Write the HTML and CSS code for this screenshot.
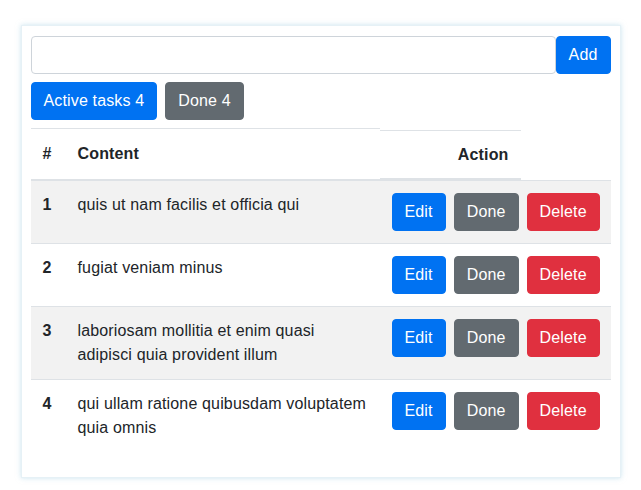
FILE: index.html
```html
<!DOCTYPE html>
<html lang="en">
<head>
<meta charset="utf-8">
<title>Tasks</title>
<link rel="stylesheet" href="styles.css">
</head>
<body>
<div class="card">
  <form class="add-row" onsubmit="return false">
    <input class="field" type="text" aria-label="New task">
    <button class="btn btn-primary" type="submit">Add</button>
  </form>
  <div class="tabs">
    <button class="btn btn-primary" type="button">Active tasks 4</button>
    <button class="btn btn-secondary" type="button">Done 4</button>
  </div>
  <table class="tasks">
    <colgroup>
      <col class="col-num">
      <col class="col-content">
      <col class="col-action">
    </colgroup>
    <thead>
      <tr>
        <th class="head-cell">#</th>
        <th class="head-cell">Content</th>
        <th class="act-head"><div class="act-label">Action</div></th>
      </tr>
    </thead>
    <tbody>
      <tr>
        <td class="num">1</td>
        <td>quis ut nam facilis et officia qui</td>
        <td><div class="actions"><button class="btn btn-primary">Edit</button><button class="btn btn-secondary">Done</button><button class="btn btn-danger">Delete</button></div></td>
      </tr>
      <tr>
        <td class="num">2</td>
        <td>fugiat veniam minus</td>
        <td><div class="actions"><button class="btn btn-primary">Edit</button><button class="btn btn-secondary">Done</button><button class="btn btn-danger">Delete</button></div></td>
      </tr>
      <tr>
        <td class="num">3</td>
        <td>laboriosam mollitia et enim quasi adipisci quia provident illum</td>
        <td><div class="actions"><button class="btn btn-primary">Edit</button><button class="btn btn-secondary">Done</button><button class="btn btn-danger">Delete</button></div></td>
      </tr>
      <tr>
        <td class="num">4</td>
        <td>qui ullam ratione quibusdam voluptatem quia omnis</td>
        <td><div class="actions"><button class="btn btn-primary">Edit</button><button class="btn btn-secondary">Done</button><button class="btn btn-danger">Delete</button></div></td>
      </tr>
    </tbody>
  </table>
</div>
</body>
</html>
```

FILE: styles.css
```css
* { box-sizing: border-box; }

html, body {
  margin: 0;
  background: #ffffff;
}

body {
  font-family: "Liberation Sans", Arial, sans-serif;
  font-size: 16px;
  line-height: 24px;
  letter-spacing: 0.15px;
  color: #212529;
  padding: 25px 0;
}

.card {
  width: 600px;
  margin: 0 auto;
  background: #fff;
  border: 1px solid #e6f1f6;
  box-shadow: 0 0 5px rgba(160, 205, 225, 0.55);
  padding: 10px 9px 9px;
}

.add-row {
  display: flex;
  margin: 0;
}

.field {
  flex: 1;
  height: 38px;
  border: 1px solid #ced4da;
  border-radius: 4px;
  padding: 6px 12px;
  font: inherit;
  color: #495057;
  background: #fff;
}

.btn {
  font-family: inherit;
  font-size: 16px;
  line-height: 24px;
  letter-spacing: 0.15px;
  padding: 6px 12px;
  border: 1px solid transparent;
  border-radius: 4px;
  color: #fff;
  cursor: pointer;
  white-space: nowrap;
}

.btn-primary { background: #0072f2; border-color: #0072f2; }
.btn-secondary { background: #626a70; border-color: #626a70; }
.btn-danger { background: #e0303f; border-color: #e0303f; }

.tabs {
  display: flex;
  gap: 8px;
  margin-top: 8px;
}

.tasks {
  width: 100%;
  table-layout: fixed;
  border-collapse: collapse;
  margin-top: 8px;
  margin-bottom: 16px;
}

.col-num { width: 35px; }
.col-content { width: 314px; }
.col-action { width: 231px; }

.head-cell {
  text-align: left;
  font-weight: bold;
  padding: 13px 12px 11px;
  border-top: 1px solid #dee2e6;
  border-bottom: 2px solid #dee2e6;
  vertical-align: top;
}

.act-head {
  padding: 0;
  vertical-align: top;
}

.act-label {
  width: 141px;
  margin-top: 1px;
  padding: 12px 12px 11px;
  text-align: right;
  border-top: 1px solid #dee2e6;
  border-bottom: 2px solid #dee2e6;
}

.tasks td {
  padding: 12px;
  vertical-align: top;
  border-top: 1px solid #dee2e6;
}

.tasks tbody tr:nth-child(odd) { background: #f2f2f2; }

.num { font-weight: bold; }

.actions {
  display: flex;
  gap: 8px;
}
```
